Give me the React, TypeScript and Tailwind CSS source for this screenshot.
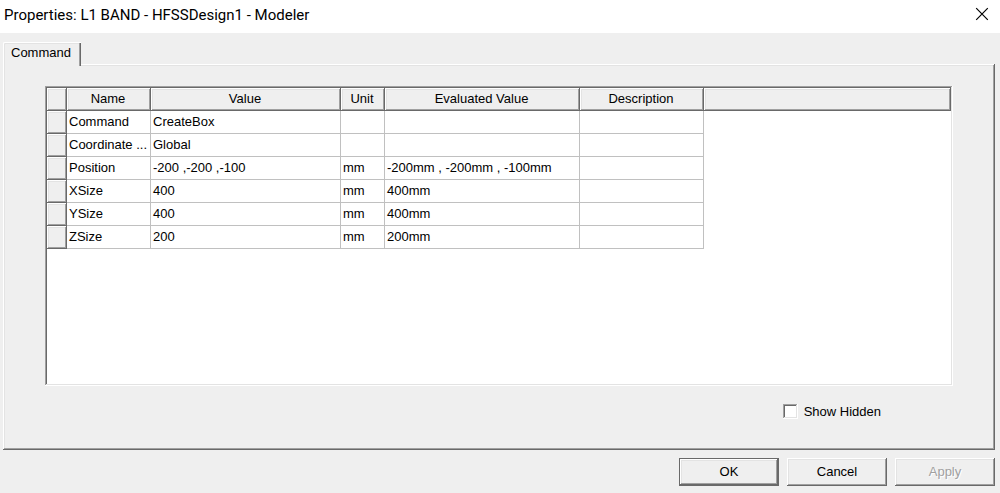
import { useState } from "react";

type Row = { name: string; value: string; unit?: string; evaluated?: string };

const rows: Row[] = [
  { name: "Command", value: "CreateBox" },
  { name: "Coordinate ...", value: "Global" },
  { name: "Position", value: "-200 ,-200 ,-100", unit: "mm", evaluated: "-200mm , -200mm , -100mm" },
  { name: "XSize", value: "400", unit: "mm", evaluated: "400mm" },
  { name: "YSize", value: "400", unit: "mm", evaluated: "400mm" },
  { name: "ZSize", value: "200", unit: "mm", evaluated: "200mm" },
];

const raised =
  "shadow-[inset_-1px_-1px_#696969,inset_1px_1px_#ffffff,inset_-2px_-2px_#a0a0a0,inset_2px_2px_#e3e3e3]";
const sunken =
  "shadow-[inset_-1px_-1px_#ffffff,inset_1px_1px_#a0a0a0,inset_-2px_-2px_#e3e3e3,inset_2px_2px_#696969]";
const headCell = `h-[23px] bg-[#efefef] p-0 pr-[2px] pb-[2px] text-center font-normal ${raised}`;
const cell = "h-[23px] overflow-hidden border-r border-b border-[#c0c0c0] bg-white p-0 pl-[2px] whitespace-nowrap";

export default function App() {
  const [showHidden, setShowHidden] = useState(false);

  return (
    <div className="flex min-h-screen flex-col bg-[#efefef] font-['Liberation_Sans',Arial,sans-serif] text-[13px] leading-4 text-black">
      <header className="flex h-[33px] items-center justify-between bg-white pr-[11px] pl-1">
        <h1 className="pb-1 font-[Roboto,'Open_Sans',sans-serif] text-[15px] leading-5 whitespace-nowrap">
          Properties: L1 BAND - HFSSDesign1 - Modeler
        </h1>
        <button type="button" aria-label="Close" className="pb-[5px]">
          <svg width="14" height="14" viewBox="0 0 14 14" fill="none" stroke="#000" strokeWidth="1.2">
            <path d="M1.2 1.2 12.8 12.8M12.8 1.2 1.2 12.8" />
          </svg>
        </button>
      </header>

      <main className="flex flex-1 flex-col pt-[9px] pr-[5px] pb-[7px] pl-[3px]">
        <div role="tablist" className="relative z-10 -mb-[2px] flex">
          <button
            type="button"
            role="tab"
            aria-selected="true"
            className="h-6 rounded-tl-[2px] border-t border-l border-white bg-[#efefef] pr-[10px] pb-1 pl-[7px] shadow-[inset_-1px_0_#696969,inset_-2px_0_#a0a0a0,inset_1px_1px_#e3e3e3]"
          >
            Command
          </button>
        </div>

        <section role="tabpanel" className={`flex flex-1 flex-col px-[42px] pt-[22px] pb-[31px] ${raised}`}>
          <div className={`flex-1 bg-white p-[2px] ${sunken}`}>
            <table className="w-full table-fixed border-separate border-spacing-0">
              <colgroup>
                <col className="w-5" />
                <col className="w-[84px]" />
                <col className="w-[190px]" />
                <col className="w-11" />
                <col className="w-[195px]" />
                <col className="w-[124px]" />
                <col />
              </colgroup>
              <thead>
                <tr>
                  <th className={headCell} />
                  <th className={headCell}>Name</th>
                  <th className={headCell}>Value</th>
                  <th className={headCell}>Unit</th>
                  <th className={headCell}>Evaluated Value</th>
                  <th className={headCell}>Description</th>
                  <th className={headCell} />
                </tr>
              </thead>
              <tbody>
                {rows.map((row) => (
                  <tr key={row.name}>
                    <th className={headCell} />
                    <td className={cell}>{row.name}</td>
                    <td className={cell}>{row.value}</td>
                    <td className={cell}>{row.unit}</td>
                    <td className={cell}>{row.evaluated}</td>
                    <td className={cell} />
                    <td className="p-0" />
                  </tr>
                ))}
              </tbody>
            </table>
          </div>

          <div className="mt-[18px] flex h-[15px] items-center justify-end pr-[72px]">
            <label className="flex items-center gap-[6px]">
              <input
                type="checkbox"
                checked={showHidden}
                onChange={(e) => setShowHidden(e.target.checked)}
                className={`size-[15px] appearance-none bg-white checked:bg-[#696969] ${sunken}`}
              />
              Show Hidden
            </label>
          </div>
        </section>

        <footer className="mt-2 flex justify-end gap-2">
          <button
            type="button"
            className="h-7 w-[100px] border border-[#696969] shadow-[inset_-1px_-1px_#696969,inset_1px_1px_#ffffff,inset_-2px_-2px_#a0a0a0,inset_2px_2px_#e3e3e3]"
          >
            OK
          </button>
          <button type="button" className={`h-7 w-[100px] ${raised}`}>
            Cancel
          </button>
          <button
            type="button"
            disabled
            className={`h-7 w-[100px] text-[#a0a0a0] [text-shadow:1px_1px_#ffffff] ${raised}`}
          >
            Apply
          </button>
        </footer>
      </main>
    </div>
  );
}
